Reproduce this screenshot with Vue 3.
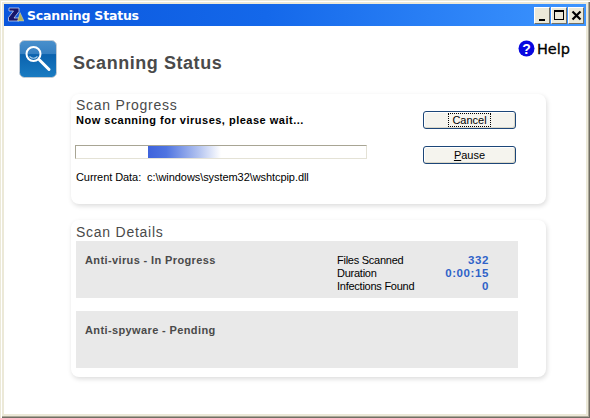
<script setup>
const stats = [
  { label: 'Files Scanned', value: '332' },
  { label: 'Duration', value: '0:00:15' },
  { label: 'Infections Found', value: '0' }
];
</script>

<template>
  <div class="window">
    <div class="titlebar">
      <svg class="app-icon" width="16" height="16" viewBox="0 0 16 16">
        <path d="M1 1H11V4.5L6 11H11V14H0.5V10.5L5.5 4H1Z" fill="#16166a" stroke="#dfe3f2" stroke-width="0.7" />
        <path d="M12 5.5L16 14H9.5Z" fill="#b4b45a" stroke="#e8e8d0" stroke-width="0.4" />
      </svg>
      <span class="title-text">Scanning Status</span>
      <div class="win-buttons">
        <div class="win-btn">
          <span class="min-glyph"></span>
        </div>
        <div class="win-btn">
          <span class="max-glyph"></span>
        </div>
        <div class="win-btn close">
          <svg width="11" height="11" viewBox="0 0 11 11">
            <path d="M1.5 1.5L9.5 9.5M9.5 1.5L1.5 9.5" stroke="#000" stroke-width="2.2" fill="none" />
          </svg>
        </div>
      </div>
    </div>

    <div class="client">
      <div class="header">
        <div class="logo">
          <svg width="38" height="38" viewBox="0 0 38 38">
            <defs>
              <linearGradient id="logoBg" x1="0" y1="0" x2="0" y2="1">
                <stop offset="0" stop-color="#4a90cc" />
                <stop offset="0.36" stop-color="#3580c2" />
                <stop offset="0.38" stop-color="#0a62ae" />
                <stop offset="1" stop-color="#1a7cc2" />
              </linearGradient>
            </defs>
            <rect x="0.5" y="0.5" width="37" height="37" rx="5" fill="url(#logoBg)" stroke="#c4ccd4" />
            <circle cx="14.5" cy="14" r="7" fill="none" stroke="#fff" stroke-width="2" />
            <path d="M10.5 16.5Q14.5 20 18.5 16.5" fill="none" stroke="#a9cde9" stroke-width="1.2" />
            <path d="M20.5 20L30 29.5" stroke="#fff" stroke-width="3" stroke-linecap="round" />
          </svg>
        </div>
        <h1 class="heading">Scanning Status</h1>
        <div class="help">
          <svg width="17" height="17" viewBox="0 0 17 17">
            <circle cx="8.5" cy="8.5" r="8" fill="#0808e0" />
            <text x="8.5" y="13.5" text-anchor="middle" class="help-mark">?</text>
          </svg>
          <span>Help</span>
        </div>
      </div>

      <section class="card progress-card">
        <div class="progress-left">
          <h2 class="card-title">Scan Progress</h2>
          <div class="scan-msg">Now scanning for viruses, please wait...</div>
          <div class="progress-bar">
            <div class="progress-chunk"></div>
          </div>
          <div class="current-data">Current Data:&nbsp; c:\windows\system32\wshtcpip.dll</div>
        </div>
        <div class="actions">
          <button class="xp-btn"><span class="focus-ring">Cancel</span></button>
          <button class="xp-btn"><span><u>P</u>ause</span></button>
        </div>
      </section>

      <section class="card details-card">
        <h2 class="card-title">Scan Details</h2>
        <div class="detail-row first">
          <div class="detail-name">Anti-virus - In Progress</div>
          <div class="stats">
            <div v-for="s in stats" :key="s.label" class="stat">
              <span class="stat-label">{{ s.label }}</span>
              <span class="stat-value">{{ s.value }}</span>
            </div>
          </div>
        </div>
        <div class="detail-row">
          <div class="detail-name">Anti-spyware - Pending</div>
        </div>
      </section>
    </div>
  </div>
</template>

<style>
html, body {
  margin: 0;
  padding: 0;
  background: #fff;
}
</style>

<style scoped>
.window {
  width: 590px;
  height: 418px;
  box-sizing: border-box;
  padding: 4px;
  display: flex;
  flex-direction: column;
  background: #ece9d8;
  box-shadow: inset 1px 1px 0 #ece9d8, inset 2px 2px 0 #fff, inset -1px -1px 0 #716f64, inset -2px -2px 0 #aca899;
  font-family: "Liberation Sans", Arial, sans-serif;
  overflow: hidden;
}

.titlebar {
  height: 22px;
  flex: none;
  display: flex;
  align-items: center;
  padding: 0 2px 0 4px;
  background: linear-gradient(90deg, #0a56dc 0%, #1468ea 45%, #3d95ff 100%);
  color: #fff;
}

.app-icon {
  flex: none;
}

.title-text {
  margin-left: 3px;
  font-size: 12.5px;
  font-weight: bold;
  font-family: "DejaVu Sans", Verdana, sans-serif;
  letter-spacing: -0.2px;
}

.win-buttons {
  margin-left: auto;
  display: flex;
  gap: 1px;
}

.win-btn {
  width: 16px;
  height: 17px;
  box-sizing: border-box;
  background: #ece9d8;
  border: 1px solid;
  border-color: #fff #716f64 #716f64 #fff;
  position: relative;
  display: flex;
  align-items: center;
  justify-content: center;
}

.min-glyph {
  position: absolute;
  left: 4px;
  bottom: 2px;
  width: 6px;
  height: 2px;
  background: #000;
}

.max-glyph {
  width: 10px;
  height: 10px;
  box-sizing: border-box;
  border: 1px solid #000;
  border-top-width: 2px;
}

.client {
  flex: 1;
  background: #fff;
  padding: 14px 40px 0 15px;
  min-height: 0;
}

.header {
  height: 42px;
  display: flex;
  align-items: flex-start;
}

.logo {
  width: 38px;
  height: 38px;
  flex: none;
  line-height: 0;
}

.heading {
  margin: 13px 0 0 16px;
  font-size: 18px;
  font-weight: bold;
  color: #4a4a4a;
  font-family: "Liberation Sans", Arial, sans-serif;
  letter-spacing: 0.55px;
}

.help {
  margin: 0 -24px 0 auto;
  display: flex;
  align-items: center;
  gap: 2px;
  font-size: 14.5px;
  color: #000;
  font-family: "DejaVu Sans", Verdana, sans-serif;
  -webkit-text-stroke: 0.3px #000;
}

.help-mark {
  fill: #fff;
  font-size: 14px;
  font-weight: bold;
  font-family: "Liberation Sans", Arial, sans-serif;
  -webkit-text-stroke: 0;
}

.card {
  margin-left: 52px;
  width: 475px;
  box-sizing: border-box;
  background: #fff;
  border-radius: 8px;
  box-shadow: 1px 2px 5px rgba(0, 0, 0, 0.14);
}

.progress-card {
  height: 110px;
  margin-top: 12px;
  padding: 3px 0 0 5px;
  display: flex;
}

.progress-left {
  width: 347px;
  flex: none;
}

.card-title {
  margin: 0;
  font-size: 14px;
  line-height: 16px;
  font-weight: normal;
  color: #4a4a4a;
  letter-spacing: 0.75px;
}

.scan-msg {
  margin-top: 1px;
  font-size: 11px;
  line-height: 13px;
  font-weight: bold;
  color: #000;
  font-family: "Liberation Sans", Arial, sans-serif;
  letter-spacing: 0.5px;
}

.progress-bar {
  margin: 18px 0 0 -1px;
  width: 292px;
  height: 14px;
  box-sizing: border-box;
  background: #fff;
  border: 1px solid;
  border-color: #a8a594 #e4e2d6 #e4e2d6 #a8a594;
  padding-left: 72px;
}

.progress-chunk {
  width: 73px;
  height: 100%;
  background: linear-gradient(90deg, #3e63dc 0%, #4f74e0 25%, #b4c4f0 70%, #fff 100%);
}

.current-data {
  margin-top: 12px;
  font-size: 11px;
  line-height: 13px;
  color: #000;
  letter-spacing: -0.07px;
}

.actions {
  margin: 14px 0 0 0;
  display: flex;
  flex-direction: column;
  gap: 17px;
}

.xp-btn {
  width: 93px;
  height: 18px;
  padding: 0;
  box-sizing: border-box;
  background: #f5f4ee;
  border: 1px solid #1c4678;
  border-radius: 3px;
  box-shadow: inset 1px 1px 0 #fff, inset -1px -1px 0 #dcd8c8;
  font-family: "Liberation Sans", Arial, sans-serif;
  font-size: 11px;
  line-height: 12px;
  color: #000;
}

.focus-ring {
  display: inline-block;
  padding: 0 3px;
  outline: 1px dotted #000;
}

.details-card {
  height: 157px;
  margin-top: 16px;
  padding: 3px 28px 0 5px;
}

.details-card .card-title {
  line-height: 18px;
}

.detail-row {
  height: 57px;
  margin-top: 13px;
  background: #e9e9e9;
  display: flex;
  padding: 13px 29px 0 9px;
  box-sizing: border-box;
}

.detail-row.first {
  margin-top: 0;
}

.detail-name {
  width: 252px;
  flex: none;
  font-size: 11px;
  line-height: 13px;
  font-weight: bold;
  color: #4a4a4a;
  letter-spacing: 0.38px;
}

.stats {
  flex: 1;
}

.stat {
  display: flex;
  justify-content: space-between;
  font-size: 11px;
  line-height: 13px;
  color: #000;
  letter-spacing: -0.25px;
}

.stat-value {
  color: #2f62c8;
  font-weight: bold;
  font-size: 11.5px;
  letter-spacing: 0.6px;
}
</style>
